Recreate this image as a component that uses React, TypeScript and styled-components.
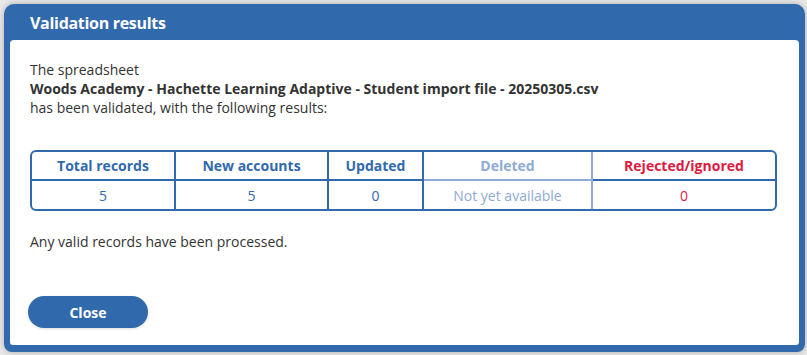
import { createGlobalStyle, styled } from "styled-components";

const Global = createGlobalStyle`
  html, body {
    margin: 0;
    padding: 0;
    background: #e8e8e8;
    font-family: "Open Sans", "Noto Sans", Arial, sans-serif;
  }
  * { box-sizing: border-box; }
`;

const BLUE = "#3169ad";
const LIGHT = "#8eabd5";

type Col = { label: string; value: string; tone?: "muted" | "alert" };

const columns: Col[] = [
  { label: "Total records", value: "5" },
  { label: "New accounts", value: "5" },
  { label: "Updated", value: "0" },
  { label: "Deleted", value: "Not yet available", tone: "muted" },
  { label: "Rejected/ignored", value: "0", tone: "alert" },
];

export default function App() {
  return (
    <>
      <Global />
      <Backdrop>
        <Modal>
          <Header>Validation results</Header>
          <Body>
            <Intro>
              The spreadsheet
              <br />
              <b>Woods Academy - Hachette Learning Adaptive - Student import file - 20250305.csv</b>
              <br />
              has been validated, with the following results:
            </Intro>
            <Results>
              {columns.map((c, i) => (
                <HeadCell key={c.label} $tone={c.tone} $last={i === columns.length - 1}>
                  {c.label}
                </HeadCell>
              ))}
              {columns.map((c, i) => (
                <ValueCell key={c.label} $tone={c.tone} $last={i === columns.length - 1}>
                  {c.value}
                </ValueCell>
              ))}
            </Results>
            <Note>Any valid records have been processed.</Note>
            <CloseButton>Close</CloseButton>
          </Body>
        </Modal>
      </Backdrop>
    </>
  );
}

const Backdrop = styled.div`
  width: 807px;
  height: 355px;
  padding: 4px 2px 3px 4px;
`;

const Modal = styled.div`
  width: 801px;
  height: 348px;
  background: ${BLUE};
  border-radius: 10px 10px 8px 8px;
  box-shadow: 0 0 6px rgba(0, 0, 0, 0.25);
  display: flex;
  flex-direction: column;
  padding: 0 6px 7px 6px;
`;

const Header = styled.div`
  height: 36px;
  display: flex;
  align-items: center;
  padding: 2px 0 0 20px;
  color: #fff;
  font-weight: 700;
  font-size: 16px;
  letter-spacing: -0.3px;
`;

const Body = styled.div`
  flex: 1;
  background: #fff;
  border-radius: 4px 4px 3px 3px;
  padding: 20px 20px 17px 20px;
  color: #333;
  font-size: 14px;
  line-height: 19px;
  display: flex;
  flex-direction: column;
  align-items: flex-start;
`;

const Intro = styled.div`
  b { font-weight: 700; }
`;

const Results = styled.div`
  margin-top: 33px;
  width: 747px;
  display: grid;
  grid-template-columns: 144px 153px 95px 169px 1fr;
  border: 2px solid ${BLUE};
  border-radius: 6px;
  overflow: hidden;
`;

const toneColor = (tone?: string) =>
  tone === "muted" ? LIGHT : tone === "alert" ? "#e0193f" : BLUE;

const HeadCell = styled.div<{ $tone?: string; $last?: boolean }>`
  height: 29px;
  display: flex;
  align-items: center;
  justify-content: center;
  font-weight: 700;
  color: ${(p) => toneColor(p.$tone)};
  border-bottom: 2px solid ${(p) => (p.$tone === "muted" ? LIGHT : BLUE)};
  border-right: ${(p) => (p.$last ? "none" : `2px solid ${p.$tone === "muted" ? LIGHT : BLUE}`)};
`;

const ValueCell = styled.div<{ $tone?: string; $last?: boolean }>`
  height: 28px;
  display: flex;
  align-items: center;
  justify-content: center;
  color: ${(p) => toneColor(p.$tone)};
  border-right: ${(p) => (p.$last ? "none" : `2px solid ${p.$tone === "muted" ? LIGHT : BLUE}`)};
`;

const Note = styled.div`
  margin-top: 21px;
`;

const CloseButton = styled.button`
  margin-top: 45px;
  margin-left: -2px;
  width: 120px;
  height: 32px;
  border: none;
  border-radius: 16px;
  background: ${BLUE};
  color: #fff;
  font-family: inherit;
  font-size: 14px;
  font-weight: 700;
  cursor: pointer;
  box-shadow: 0 1px 3px rgba(0, 0, 0, 0.15);
`;
